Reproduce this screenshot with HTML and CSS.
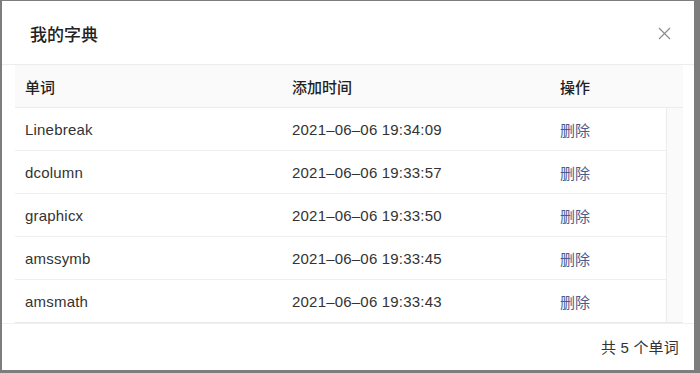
FILE: index.html
```html
<!DOCTYPE html>
<html lang="zh-CN">
<head>
    <meta charset="UTF-8">
    <meta name="viewport" content="width=device-width, initial-scale=1.0">
    <title>我的字典</title>
    <link rel="stylesheet" href="styles.css">
</head>
<body>
    <div class="modal">
        <div class="modal-header">
            <h3 class="modal-title">我的字典</h3>
            <span class="modal-close">
                <svg width="13" height="13" viewBox="0 0 13 13"><path d="M1 1 L12 12 M12 1 L1 12" stroke="#8c8c8c" stroke-width="1.2" fill="none"/></svg>
            </span>
        </div>
        <div class="modal-body">
            <div class="table-head">
                <div class="cell">单词</div>
                <div class="cell">添加时间</div>
                <div class="cell">操作</div>
            </div>
            <div class="table-wrap">
                <div class="table-body">
                    <div class="row">
                        <div class="cell">Linebreak</div>
                        <div class="cell">2021–06–06 19:34:09</div>
                        <div class="cell"><a class="link">删除</a></div>
                    </div>
                    <div class="row">
                        <div class="cell">dcolumn</div>
                        <div class="cell">2021–06–06 19:33:57</div>
                        <div class="cell"><a class="link">删除</a></div>
                    </div>
                    <div class="row">
                        <div class="cell">graphicx</div>
                        <div class="cell">2021–06–06 19:33:50</div>
                        <div class="cell"><a class="link">删除</a></div>
                    </div>
                    <div class="row">
                        <div class="cell">amssymb</div>
                        <div class="cell">2021–06–06 19:33:45</div>
                        <div class="cell"><a class="link">删除</a></div>
                    </div>
                    <div class="row">
                        <div class="cell">amsmath</div>
                        <div class="cell">2021–06–06 19:33:43</div>
                        <div class="cell"><a class="link">删除</a></div>
                    </div>
                </div>
                <div class="scroll-track"></div>
            </div>
        </div>
        <div class="modal-footer">共 5 个单词</div>
    </div>
</body>
</html>
```

FILE: styles.css
```css
html, body {
    margin: 0;
    height: 100%;
}
body {
    background-color: #7d7d7d;
    font-family: "Liberation Sans", "Noto Sans CJK SC", sans-serif;
    font-size: 15px;
    letter-spacing: 0.2px;
    color: #333;
    padding: 1px 6px 3px 2px;
    box-sizing: border-box;
}
.modal {
    background-color: #fff;
    height: 100%;
    display: flex;
    flex-direction: column;
}
.modal-header {
    height: 63px;
    border-bottom: 1px solid #ececec;
    display: flex;
    align-items: center;
    justify-content: space-between;
    padding: 0 23px 0 28px;
}
.modal-title {
    margin: 0;
    font-size: 17px;
    font-weight: 500;
    letter-spacing: 0;
    color: #222;
    padding-top: 1px;
}
.modal-close {
    display: flex;
    padding-top: 1px;
}
.modal-body {
    padding: 0 11px 0 13px;
}
.table-head,
.row {
    display: grid;
    grid-template-columns: 267px 268px 1fr;
    align-items: center;
}
.table-head {
    height: 42px;
    background-color: #fafafa;
    border-bottom: 1px solid #ececec;
    font-weight: 500;
    letter-spacing: 0;
    color: #222;
}
.cell {
    padding: 0 10px;
    white-space: nowrap;
}
.table-wrap {
    display: flex;
    border-bottom: 1px solid #e8e8e8;
}
.table-body {
    flex: 1;
}
.row {
    height: 42px;
    border-bottom: 1px solid #efefef;
}
.row:last-child {
    border-bottom: none;
}
.scroll-track {
    width: 16px;
    background-color: #fafafa;
    border-left: 1px solid #ececec;
}
.link {
    color: #4a5b8d;
    letter-spacing: 0;
    cursor: pointer;
}
.modal-footer {
    flex: 1;
    border-top: 1px solid #f0f0f0;
    display: flex;
    align-items: center;
    justify-content: flex-end;
    padding: 0 15px 2px 0;
}
```
